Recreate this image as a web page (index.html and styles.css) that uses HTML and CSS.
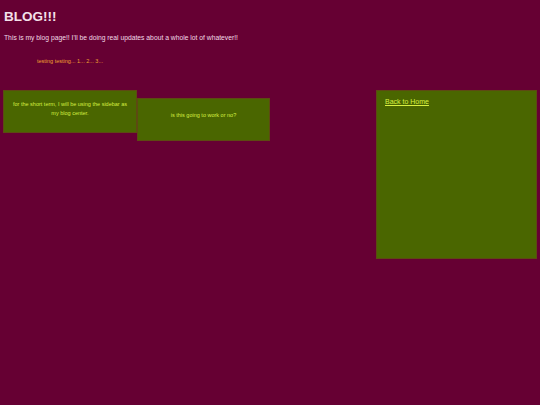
FILE: index.html
```html
<!DOCTYPE html>
<html>
<head>
<meta charset="utf-8">
<link rel="stylesheet" href="styles.css">
</head>
<body>
<h1 class="title">BLOG!!!</h1>
<p class="intro">This is my blog page!! I'll be doing real updates about a whole lot of whatever!!</p>
<div class="layout">
  <div class="posts">
    <div class="col">
      <p class="testing">testing testing... 1... 2... 3...</p>
      <div class="post post-a"><p>for the short term, I will be using the sidebar as my blog center.</p></div>
    </div>
    <div class="col">
      <div class="post post-b"><p>is this going to work or no?</p></div>
    </div>
  </div>
  <div class="sidebar">
    <a href="#" class="home">Back to Home</a>
  </div>
</div>
</body>
</html>
```
FILE: styles.css
```css
html, body {
  margin: 0;
  background: #660033;
}
body {
  padding: 4px 3px 0 3px;
  font-family: "Liberation Sans", Arial, sans-serif;
  color: #f2dbe6;
}
.title {
  margin: 4px 0 0 1px;
  font-size: 13.5px;
  line-height: 18px;
  font-weight: bold;
  color: #f4e0ea;
}
.intro {
  margin: 8px 0 0 1px;
  font-size: 6.75px;
  line-height: 8px;
}
.layout {
  display: flex;
  justify-content: space-between;
  align-items: flex-start;
}
.posts {
  display: flex;
  align-items: flex-start;
}
.col {
  display: flex;
  flex-direction: column;
}
.testing {
  margin: 16px 0 0 0;
  text-align: center;
  font-size: 5.5px;
  line-height: 7px;
  color: #f0a030;
}
.post {
  box-sizing: border-box;
  width: 133px;
  height: 43px;
  background: #4a6600;
  border: 1px solid #5d4a12;
  display: flex;
  align-items: center;
  justify-content: center;
  padding: 0 6px 5px;
  text-align: center;
  color: #d4ee40;
  font-size: 5.5px;
  line-height: 9px;
}
.post p { margin: 0; }
.post-a { width: 134px; margin-top: 25px; }
.post-b { margin-top: 56px; padding-bottom: 9px; }
.sidebar {
  box-sizing: border-box;
  width: 161px;
  height: 169px;
  margin-top: 48px;
  background: #4a6600;
  border: 1px solid #5d4a12;
  padding: 7px 8px;
  font-size: 7px;
  line-height: 8px;
}
.home {
  color: #d8f040;
  text-decoration: underline;
}
```
